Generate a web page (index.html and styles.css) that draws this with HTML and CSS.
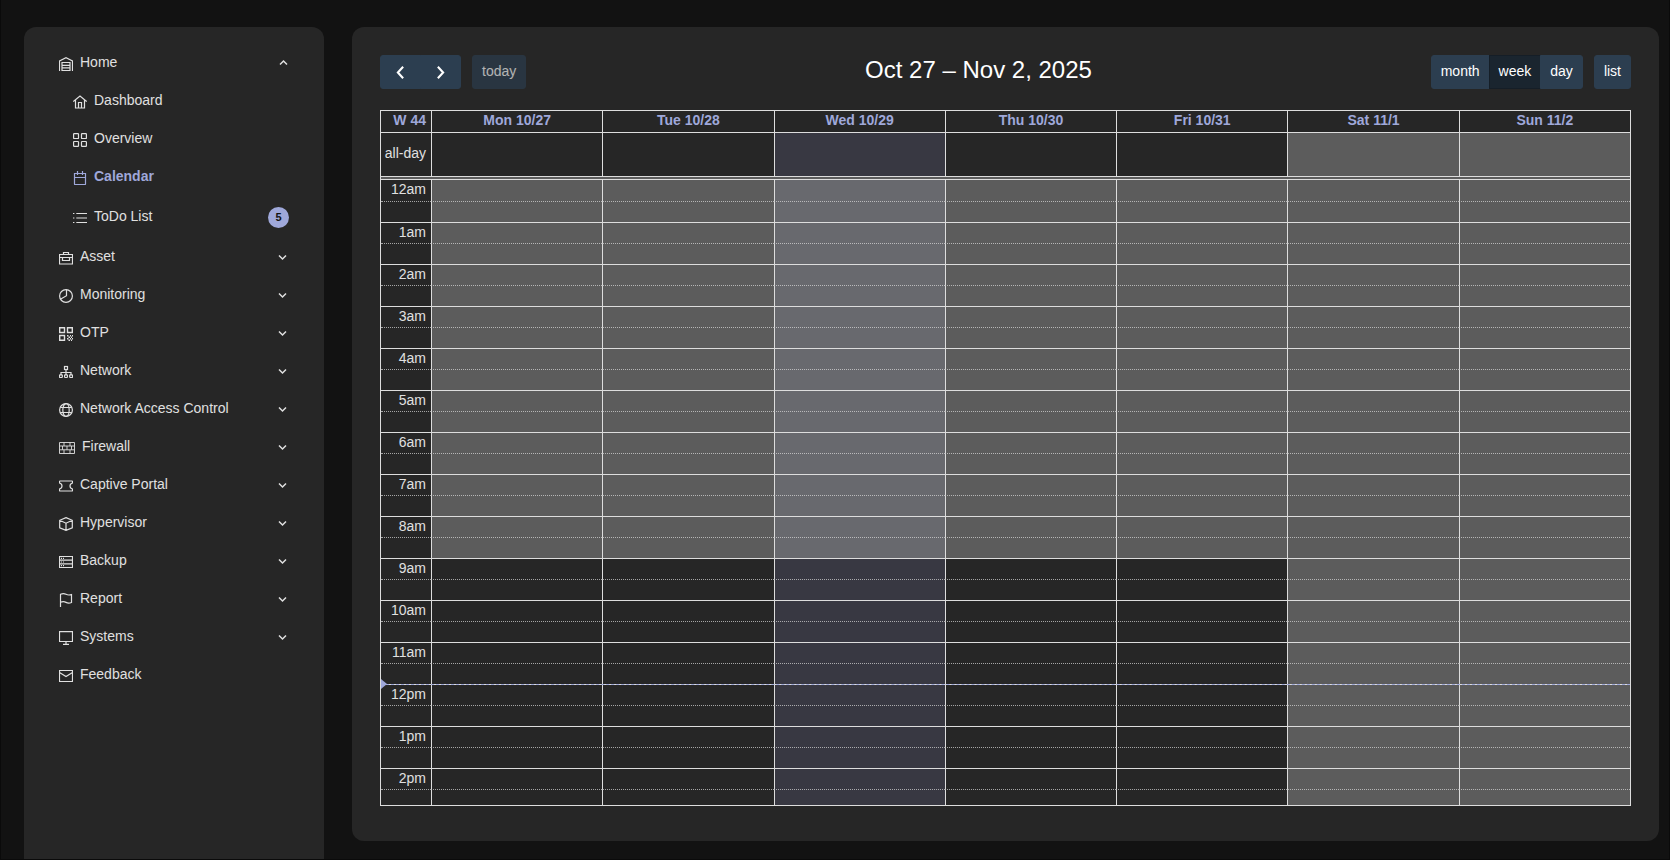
FILE: index.html
```html
<!DOCTYPE html>
<html lang="en">
<head>
    <meta charset="UTF-8">
    <meta name="viewport" content="width=device-width, initial-scale=1.0">
    <title>Calendar</title>
    <link rel="stylesheet" href="styles.css">
</head>
<body>

    <svg class="sprite" aria-hidden="true">
        <symbol id="chevron" viewBox="0 0 12 12"><path d="M2 4.500 5.500 8 9 4.500" stroke-width="1.500"/></symbol>
    </svg>

    <div class="page">
        <nav class="sidebar">
            <ul class="menu">
                <li>
                    <button type="button" class="item open">
                        <svg class="icon" viewBox="0 0 14 14"><path d="M.5 14V4L7 .7 13.500 4v10M3 14V5.500h8V14M3 8.300h8M3 10.900h8M3 13.500h8"/></svg>
                        <span>Home</span>
                        <svg class="arrow"><use href="#chevron"/></svg>
                    </button>
                    <ul class="submenu">
                        <li><a class="item" href="#">
                            <svg class="icon" viewBox="0 0 14 14"><path d="M.3 6.500 7 1l6.700 5.500M2.500 5v8h9V5M5.500 13V7.500h3V13"/></svg>
                            <span>Dashboard</span></a></li>
                        <li><a class="item" href="#">
                            <svg class="icon" viewBox="0 0 14 14"><rect x=".6" y=".6" width="4.900" height="4.900" rx=".6"/><rect x="8.500" y=".6" width="4.900" height="4.900" rx=".6"/><rect x=".6" y="8.500" width="4.900" height="4.900" rx=".6"/><rect x="8.500" y="8.500" width="4.900" height="4.900" rx=".6"/></svg>
                            <span>Overview</span></a></li>
                        <li><a class="item active" href="#">
                            <svg class="icon" viewBox="0 0 14 14"><path d="M1.500 2.500h11V13q0 .5-.5.5H2q-.5 0-.5-.5zM1.500 6.500h11M4.500 0v4M9.500 0v4"/></svg>
                            <span>Calendar</span></a></li>
                        <li><a class="item tall" href="#">
                            <svg class="icon" viewBox="0 0 14 14"><path d="M3.300 2.500H14M3.300 7H14M3.300 11.500H14M0 2.500h1.400M0 7h1.400M0 11.500h1.400"/></svg>
                            <span>ToDo List</span>
                            <span class="badge">5</span></a></li>
                    </ul>
                </li>
                <li><button type="button" class="item">
                    <svg class="icon" viewBox="0 0 14 14"><path d="M.5 3.500h13v9.500H.5zM4.500 3.500v-2h5v2M.5 6.500h13M3.500 6.500v3h7v-3"/></svg>
                    <span>Asset</span>
                    <svg class="arrow"><use href="#chevron"/></svg></button></li>
                <li><button type="button" class="item">
                    <svg class="icon" viewBox="0 0 14 14"><circle cx="7" cy="7" r="6.400"/><path d="M7.500.6v6.100L1.400 10.300"/></svg>
                    <span>Monitoring</span>
                    <svg class="arrow"><use href="#chevron"/></svg></button></li>
                <li><button type="button" class="item">
                    <svg class="icon" viewBox="0 0 14 14"><path d="M.7.7h4.800v4.800H.7zM8.500.7h4.800v4.800H8.500zM.7 8.500h4.800v4.800H.7z" stroke-width="1.400"/><path d="M8 8.700h1.500M11 8.700h1M13 8.700h1M9.500 10.200h1.500M12 10.200h1M8 11.700h1.500M11 11.700h1M13 11.700h1M9.500 13.200h1.500M12 13.200h1" stroke-width="1.400"/></svg>
                    <span>OTP</span>
                    <svg class="arrow"><use href="#chevron"/></svg></button></li>
                <li><button type="button" class="item">
                    <svg class="icon" viewBox="0 0 14 14"><rect x="5.500" y="1.500" width="3" height="3"/><path d="M7 4.500V10M2 10V7.500h10V10"/><rect x=".5" y="9.800" width="2.800" height="2.700" rx=".5"/><rect x="5.600" y="9.800" width="2.800" height="2.700" rx=".5"/><rect x="10.700" y="9.800" width="2.800" height="2.700" rx=".5"/></svg>
                    <span>Network</span>
                    <svg class="arrow"><use href="#chevron"/></svg></button></li>
                <li><button type="button" class="item">
                    <svg class="icon" viewBox="0 0 14 14"><circle cx="7" cy="7" r="6.400"/><ellipse cx="7" cy="7" rx="3.200" ry="6.400"/><path d="M1.300 4.500h11.400M1.300 9.500h11.400"/></svg>
                    <span>Network Access Control</span>
                    <svg class="arrow"><use href="#chevron"/></svg></button></li>
                <li><button type="button" class="item">
                    <svg class="icon wide" viewBox="0 0 16 14"><path d="M.5 1.500h15v11H.5zM.5 5h15M.5 8.800h15M5 1.500V5M11 1.500V5M3.500 5v3.800M8 5v3.800M12.500 5v3.800M5 8.800v3.700M11 8.800v3.700" stroke-width=".9"/></svg>
                    <span>Firewall</span>
                    <svg class="arrow"><use href="#chevron"/></svg></button></li>
                <li><button type="button" class="item">
                    <svg class="icon" viewBox="0 0 14 14"><path d="M1 2h12q.5 0 .5.500v1.500Q11 4.800 11 7t2.500 3v1.500q0 .5-.5.5H1q-.5 0-.5-.5V10Q3 9.200 3 7T.5 4V2.500q0-.5.500-.5z"/></svg>
                    <span>Captive Portal</span>
                    <svg class="arrow"><use href="#chevron"/></svg></button></li>
                <li><button type="button" class="item">
                    <svg class="icon" viewBox="0 0 14 14"><path d="M7 .6l6.300 2.700v7.500L7 13.400.7 10.800V3.300zM.7 3.300 7 6.200l6.300-2.900M7 6.200v7.200"/></svg>
                    <span>Hypervisor</span>
                    <svg class="arrow"><use href="#chevron"/></svg></button></li>
                <li><button type="button" class="item">
                    <svg class="icon" viewBox="0 0 14 14"><path d="M.5 1.500h13v11H.5zM.5 5.200h13M.5 8.800h13M2 3.300h1M4 3.300h1M2 7h1M4 7h1M2 10.700h1M4 10.700h1"/></svg>
                    <span>Backup</span>
                    <svg class="arrow"><use href="#chevron"/></svg></button></li>
                <li><button type="button" class="item">
                    <svg class="icon" viewBox="0 0 14 14"><path d="M1.500 14V1.300Q4.500 0 7 1.300t5.500.200V9.500Q9.500 10.700 7 9.400T1.500 9.300"/></svg>
                    <span>Report</span>
                    <svg class="arrow"><use href="#chevron"/></svg></button></li>
                <li><button type="button" class="item">
                    <svg class="icon" viewBox="0 0 14 14"><path d="M.5 .6h13v9.900H.5zM7 10.500v3M4 13.400h6"/></svg>
                    <span>Systems</span>
                    <svg class="arrow"><use href="#chevron"/></svg></button></li>
                <li><a class="item" href="#">
                    <svg class="icon" viewBox="0 0 14 14"><path d="M.5 1.500h13v11H.5zM.5 3.500 7 7.500l6.500-4"/></svg>
                    <span>Feedback</span></a></li>
            </ul>
        </nav>

        <main class="card">
            <div class="toolbar">
                <div class="chunk">
                    <div class="group">
                        <button type="button" class="btn nav" aria-label="Previous week"><svg viewBox="0 0 20 20"><path d="m12.500 4.500-5 5.500 5 5.500"/></svg></button>
                        <button type="button" class="btn nav" aria-label="Next week"><svg viewBox="0 0 20 20"><path d="m7.500 4.500 5 5.500-5 5.500"/></svg></button>
                    </div>
                    <button type="button" class="btn" disabled>today</button>
                </div>
                <h2>Oct 27 – Nov 2, 2025</h2>
                <div class="chunk">
                    <div class="group">
                        <button type="button" class="btn">month</button>
                        <button type="button" class="btn pressed">week</button>
                        <button type="button" class="btn">day</button>
                    </div>
                    <button type="button" class="btn">list</button>
                </div>
            </div>

            <div class="calendar">
                <table class="days">
                    <thead>
                        <tr>
                            <th class="axis">W 44</th>
                            <th>Mon 10/27</th>
                            <th>Tue 10/28</th>
                            <th>Wed 10/29</th>
                            <th>Thu 10/30</th>
                            <th>Fri 10/31</th>
                            <th>Sat 11/1</th>
                            <th>Sun 11/2</th>
                        </tr>
                    </thead>
                    <tbody>
                        <tr class="all-day">
                            <td class="axis">all-day</td>
                            <td></td>
                            <td></td>
                            <td class="today"></td>
                            <td></td>
                            <td></td>
                            <td class="off"></td>
                            <td class="off"></td>
                        </tr>
                    </tbody>
                </table>
                <div class="divider"></div>
                <div class="slots">
                    <table>
                        <tbody id="slotRows"></tbody>
                    </table>
                    <div class="now"></div>
                </div>
            </div>
        </main>
    </div>

    <script>
        const rows = document.getElementById('slotRows');
        const today = 2;

        // two half-hour rows for every hour, business hours start at 9
        for (let slot = 0; slot < 30; slot++) {
            const hour = Math.floor(slot / 2);
            const row = rows.insertRow();
            const axis = row.insertCell();
            axis.className = 'axis';
            if (slot % 2 === 0) {
                axis.textContent = (hour % 12 || 12) + (hour < 12 ? 'am' : 'pm');
            } else {
                row.className = 'half';
            }
            for (let day = 0; day < 7; day++) {
                const cell = row.insertCell();
                if (day === today) cell.classList.add('today');
                if (day > 4 || hour < 9) cell.classList.add('off');
            }
        }
    </script>
</body>
</html>
```
FILE: styles.css
```css
* {
    box-sizing: border-box;
}
body {
    margin: 0;
    background-color: #121212;
    color: #e0e0e0;
    font-family: "Liberation Sans", Arial, sans-serif;
    font-size: 14px;
}
.sprite {
    display: none;
}
symbol path {
    fill: none;
    stroke: #e0e0e0;
}
.page {
    display: flex;
    gap: 28px;
    height: 100vh;
    padding: 27px 10px 0 23px;
    border: solid #0a0a0a;
    border-width: 0 1px 1px;
    overflow: hidden;
}

/* sidebar */
.sidebar {
    flex: 0 0 300px;
    padding: 16px 35px 0;
    background-color: #262626;
    border-radius: 12px 12px 0 0;
}
.menu, .submenu {
    list-style: none;
    margin: 0;
    padding: 0;
}
.submenu {
    padding-left: 14px;
}
.item {
    display: flex;
    align-items: center;
    gap: 7px;
    width: 100%;
    height: 38px;
    padding: 0;
    border: none;
    background: none;
    color: #e0e0e0;
    font: inherit;
    text-decoration: none;
    cursor: pointer;
}
.item.tall {
    height: 42px;
}
.item.active {
    color: #9fa8da;
    font-weight: bold;
}
.icon {
    width: 14px;
    height: 14px;
    margin-top: 4px;
    fill: none;
    stroke: currentColor;
    stroke-width: 1.2;
}
.icon.wide {
    width: 16px;
}
.arrow {
    width: 12px;
    height: 12px;
    margin: 2px 0 0 auto;
}
.open .arrow {
    transform: rotate(180deg);
}
.badge {
    width: 21px;
    height: 21px;
    margin-left: auto;
    margin-top: 2px;
    border-radius: 50%;
    background-color: #9fa8da;
    color: #121212;
    font-size: 11px;
    font-weight: bold;
    line-height: 20px;
    text-align: center;
}

/* calendar card */
.card {
    flex: 1;
    display: flex;
    flex-direction: column;
    min-width: 0;
    margin-bottom: 18px;
    padding: 28px 28px 35px;
    background-color: #262626;
    border-radius: 12px;
}
.toolbar {
    display: flex;
    justify-content: space-between;
    align-items: center;
    margin-bottom: 21px;
}
.toolbar h2 {
    margin: 0 0 4px;
    color: #fff;
    font-size: 24px;
    font-weight: normal;
    line-height: 30px;
}
.chunk {
    display: flex;
    gap: 11px;
}
.group {
    display: flex;
}
.btn {
    height: 34px;
    padding: 0 9px 2px;
    border: 1px solid #2c3e50;
    border-radius: 3px;
    background-color: #2c3e50;
    color: #fff;
    font: inherit;
    cursor: pointer;
}
.btn:disabled {
    opacity: 0.65;
    cursor: default;
}
.btn.nav {
    width: 41px;
    padding: 0 9px;
}
.btn.nav svg {
    display: block;
    width: 21px;
    height: 21px;
    fill: none;
    stroke: #fff;
    stroke-width: 2;
}
.btn.pressed {
    background-color: #1a252f;
    border-color: #151e27;
}
.group .btn + .btn {
    margin-left: -1px;
    border-top-left-radius: 0;
    border-bottom-left-radius: 0;
}
.group .btn:not(:last-child) {
    border-top-right-radius: 0;
    border-bottom-right-radius: 0;
}

.calendar {
    flex: 1;
    display: flex;
    flex-direction: column;
    min-height: 0;
    border: 1px solid #ddd;
}
table {
    width: 100%;
    table-layout: fixed;
    border-collapse: separate;
    border-spacing: 0;
}
th, td {
    padding: 0;
    border-left: 1px solid #ddd;
}
th {
    height: 21px;
    color: #9fa8da;
    line-height: 18px;
    vertical-align: top;
}
.axis {
    width: 50px;
    padding-right: 5px;
    border-left: none;
    text-align: right;
}
.all-day td {
    height: 44px;
    border-top: 1px solid #ddd;
    padding-bottom: 4px;
}
.off {
    background-color: #5c5c5c;
}
.today {
    background-color: #383842;
}
.today.off {
    background-color: #68696e;
}
.divider {
    flex: none;
    height: 4px;
    border: solid #ddd;
    border-width: 1px 0;
    background-color: #5c5c5c;
}
.slots {
    flex: 1;
    position: relative;
    min-height: 0;
    overflow: hidden;
}
.slots td {
    height: 21px;
    border-top: 1px solid #ddd;
    line-height: 18px;
    vertical-align: top;
}
.slots tr:first-child td {
    border-top: none;
}
.slots .half td {
    border-top: 1px dotted rgba(221, 221, 221, 0.7);
}
/* noon marker, 24 half-hour rows down */
.now {
    position: absolute;
    top: 504px;
    left: 0;
    right: 0;
    border-top: 1px dashed #9fa8da;
}
.now::before {
    content: "";
    position: absolute;
    top: -6px;
    left: 0;
    border: solid transparent;
    border-width: 5px 0 5px 6px;
    border-left-color: #9fa8da;
}
```
